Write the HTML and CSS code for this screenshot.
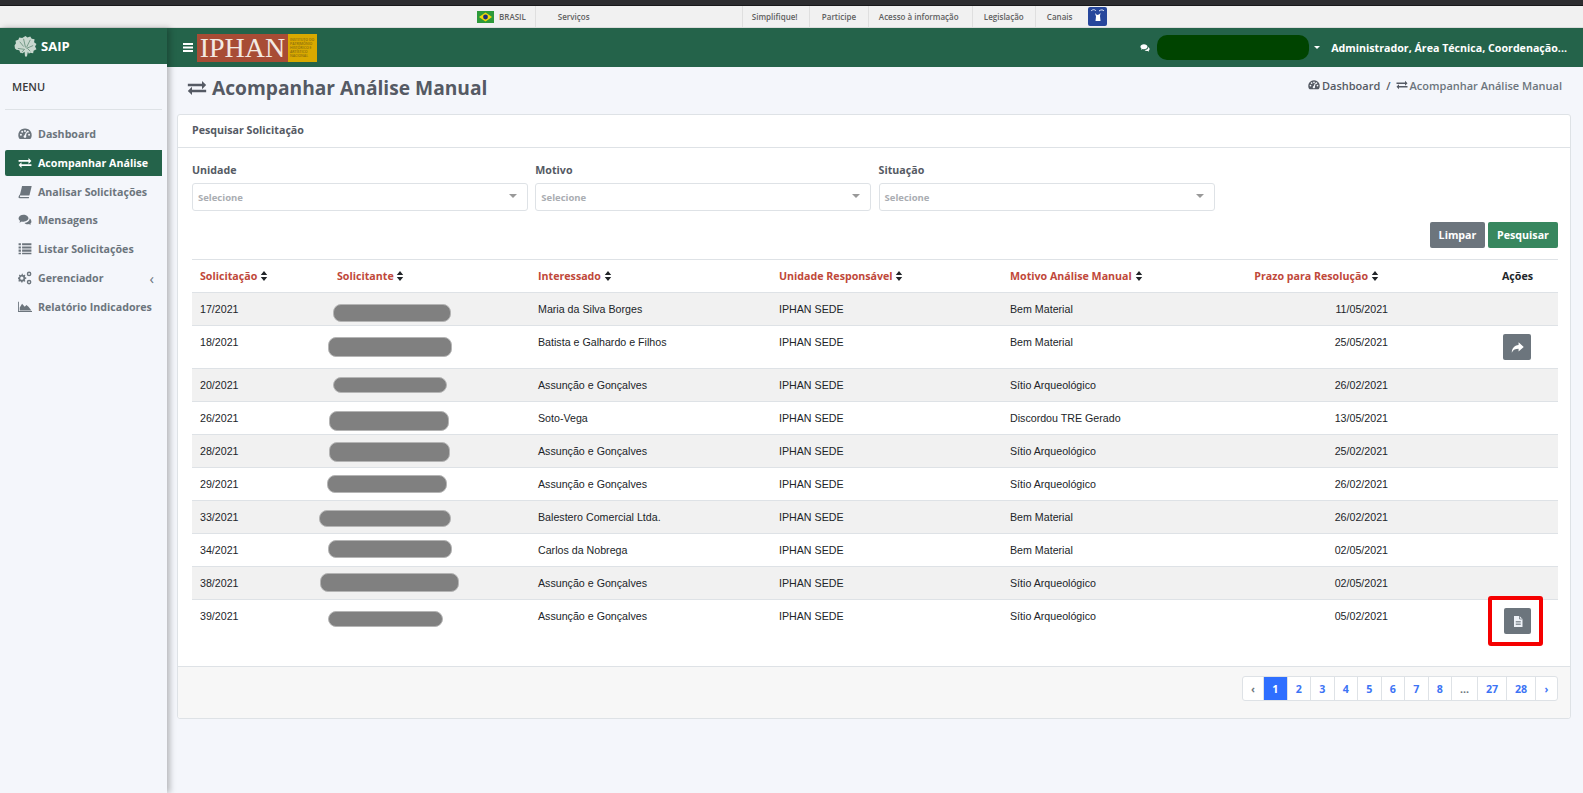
FILE: index.html
```html
<!DOCTYPE html>
<html lang="pt-BR">
<head>
    <meta charset="UTF-8">
    <title>SAIP - Acompanhar Análise Manual</title>
    <link rel="stylesheet" href="styles.css">
</head>
<body>
    <svg class="defs" width="0" height="0">
        <defs>
            <symbol id="i-exchange" viewBox="0 0 24 24"><path d="M1 7h17V3.500l5 5-5 5V10H1zM23 17H6v3.500l-5-5 5-5V14h17z"/></symbol>
            <symbol id="i-dash" viewBox="0 0 24 24"><path fill-rule="evenodd" d="M12 2.500a11.500 11.500 0 0 0-10 17.200c.3.5.8.8 1.400.8h17.200c.6 0 1.100-.3 1.400-.8A11.500 11.500 0 0 0 12 2.500zM12 5a1.700 1.700 0 1 1 0 3.400A1.700 1.700 0 0 1 12 5zM5 14.800a1.700 1.700 0 1 1 0-3.400 1.700 1.700 0 0 1 0 3.400zm2.200-5a1.700 1.700 0 1 1 0-3.400 1.700 1.700 0 0 1 0 3.400zM13.800 17.500a2.300 2.300 0 0 1-4.300-1.200c0-1 .7-1.900 1.700-2.200l3-6.300 1.300.5-1.700 6.500c.6.800.5 1.900 0 2.700zM19 14.800a1.700 1.700 0 1 1 0-3.400 1.700 1.700 0 0 1 0 3.400zm-2.200-5a1.700 1.700 0 1 1 0-3.400 1.700 1.700 0 0 1 0 3.400z"/></symbol>
            <symbol id="i-book" viewBox="0 0 24 24"><path d="M7 1.500h16.500L19.800 17H3.300z"/><path d="M2.800 16 1 20c-.5 1.500.3 2.500 1.700 2.500h15.800l.6-2H4c-1 0-1-1.500 0-1.800h15.500l.2-.7H3.400z"/></symbol>
            <symbol id="i-comments" viewBox="0 0 24 24"><path d="M9.500 3C4.800 3 1 5.700 1 9.200c0 1.800 1 3.400 2.700 4.500-.3 1-.9 1.800-1.700 2.600 1.700-.2 3.200-.8 4.400-1.800 1 .3 2 .4 3.100.4 4.700 0 8.500-2.700 8.500-5.800S14.200 3 9.500 3z"/><path d="M20 9.500c.1 4-3.900 7.200-9 7.500 1.300 1.500 3.300 2.300 5.500 2.300.8 0 1.500-.1 2.200-.3 1 .8 2.100 1.300 3.300 1.500-.5-.6-1-1.300-1.200-2 1.400-.9 2.200-2.200 2.200-3.600 0-2.300-1.200-4.200-3-5.400z"/></symbol>
            <symbol id="i-list" viewBox="0 0 24 24"><path d="M1 2h4v3.500H1zM7 2h16v3.500H7zM1 7.500h4V11H1zM7 7.500h16V11H7zM1 13h4v3.500H1zM7 13h16v3.500H7zM1 18.500h4V21H1zM7 18.500h16V21H7z"/></symbol>
            <symbol id="i-cogs" viewBox="0 0 24 24"><path fill-rule="evenodd" d="M8 6.500l1.800.7 1.500-1 1.400 1.400-1 1.500.7 1.800 1.800.4v2l-1.800.4-.7 1.800 1 1.500-1.400 1.400-1.500-1-1.800.7-.4 1.800h-2l-.4-1.800-1.800-.7-1.500 1-1.400-1.400 1-1.500-.7-1.800L0 13.300v-2l1.800-.4.7-1.800-1-1.500 1.400-1.400 1.500 1 1.800-.7.4-1.800h2zM6.600 9.500a2.800 2.800 0 1 0 0 5.600 2.800 2.800 0 0 0 0-5.600z"/><path fill-rule="evenodd" d="M19 1a4 4 0 1 1 0 8 4 4 0 0 1 0-8zm0 2.400a1.600 1.600 0 1 0 0 3.200 1.600 1.600 0 0 0 0-3.200zM19 15a4 4 0 1 1 0 8 4 4 0 0 1 0-8zm0 2.400a1.600 1.600 0 1 0 0 3.200 1.600 1.600 0 0 0 0-3.200z"/></symbol>
            <symbol id="i-chart" viewBox="0 0 24 24"><path d="M0 3h1.500v16H24v1.500H0z"/><path d="M3 18v-5l4-6.500 4.500 5 3-3 3.500 3 5 6.500z"/></symbol>
            <symbol id="i-sort" viewBox="0 0 10 14"><path d="M5 0l4.500 5.500h-9zM5 14L.5 8.500h9z"/></symbol>
        </defs>
    </svg>

    <div class="browser-edge"></div>

    <!-- Barra do governo -->
    <nav class="gov-bar">
        <span class="gov-flag"><svg viewBox="0 0 17 12" width="17" height="12"><rect width="17" height="12" fill="#2d9a3a"/><path d="M8.500 1.500 15 6l-6.500 4.500L2 6z" fill="#f2d70c"/><circle cx="8.500" cy="6" r="2.400" fill="#1c2f7c"/></svg></span>
        <span class="gov-item gov-brasil">BRASIL</span>
        <span class="gov-item gov-servicos">Serviços</span>
        <span class="gov-item gov-simp">Simplifique!</span>
        <span class="gov-item gov-part">Participe</span>
        <span class="gov-item gov-acesso">Acesso à informação</span>
        <span class="gov-item gov-leg">Legislação</span>
        <span class="gov-item gov-can">Canais</span>
        <span class="gov-access"><svg viewBox="0 0 19 19" width="19" height="19"><rect width="19" height="19" rx="2" fill="#27479c"/><path d="M3 4c2-2 4-1.500 5 0M11 4c2-1.500 4-1.500 5 0" stroke="#dfe6f5" fill="none"/><path d="M7 6l2 2 2-.5 1.500-1.500-.5 3 .5 5h-5l.5-4.500z" fill="#fff"/></svg></span>
    </nav>

    <div class="app">
        <aside class="sidebar">
            <div class="brand">
                <svg class="brand-logo" viewBox="0 0 24 22" width="23" height="21"><path d="M12 0l2 1.500L17 .5l1.500 2.500 3 .5-.5 3 2.500 2-1.500 2.500 1.500 3-3 1.500-.5 2.500-3-.5-1.500 1-1-2-1 5h-2l-.5-5-2 1.500-2.500-.5-1-2.500-3-.5L1 13 .5 10 2 7.500 1.500 5l3-1 1-2.500 3 .5z" fill="#c9d8cf"/><path d="M6 6l4 5M10 3l2 9M17 4l-4 8M20 10l-7 3M4 13l7 1M8 17l3-3M17 16l-3-3" stroke="#5d8874" stroke-width=".8" fill="none"/></svg>
                <span class="brand-name">SAIP</span>
            </div>
            <div class="menu-title">MENU</div>
            <ul class="menu">
                <li class="menu-item"><svg class="mi"><use href="#i-dash"/></svg>Dashboard</li>
                <li class="menu-item active"><svg class="mi"><use href="#i-exchange"/></svg>Acompanhar Análise</li>
                <li class="menu-item"><svg class="mi"><use href="#i-book"/></svg>Analisar Solicitações</li>
                <li class="menu-item"><svg class="mi"><use href="#i-comments"/></svg>Mensagens</li>
                <li class="menu-item"><svg class="mi"><use href="#i-list"/></svg>Listar Solicitações</li>
                <li class="menu-item"><svg class="mi"><use href="#i-cogs"/></svg>Gerenciador<span class="chev">‹</span></li>
                <li class="menu-item"><svg class="mi"><use href="#i-chart"/></svg>Relatório Indicadores</li>
            </ul>
        </aside>

        <div class="main">
            <header class="topbar">
                <svg class="burger" viewBox="0 0 10 9" width="10" height="9"><path d="M0 0h10v2H0zM0 3.500h10v2H0zM0 7h10v2H0z" fill="#fff"/></svg>
                <div class="iphan">
                    <span class="iphan-name">IPHAN</span>
                    <span class="iphan-sub">INSTITUTO DO PATRIMÔNIO HISTÓRICO E ARTÍSTICO NACIONAL</span>
                </div>
                <div class="top-right">
                    <svg class="top-chat"><use href="#i-comments"/></svg>
                    <span class="user-hidden"></span>
                    <span class="top-caret"></span>
                    <span class="top-role">Administrador, Área Técnica, Coordenação...</span>
                </div>
            </header>

            <div class="page-head">
                <h1><svg class="h1-icon"><use href="#i-exchange"/></svg>Acompanhar Análise Manual</h1>
                <div class="crumbs">
                    <svg class="crumb-icon"><use href="#i-dash"/></svg><b>Dashboard</b>
                    <span class="crumb-sep">/</span>
                    <svg class="crumb-icon"><use href="#i-exchange"/></svg><span>Acompanhar Análise Manual</span>
                </div>
            </div>

            <section class="card">
                <div class="card-title">Pesquisar Solicitação</div>
                <div class="card-body">
                    <div class="filters">
                        <div class="field">
                            <label>Unidade</label>
                            <div class="select">Selecione<span class="select-caret"></span></div>
                        </div>
                        <div class="field">
                            <label>Motivo</label>
                            <div class="select">Selecione<span class="select-caret"></span></div>
                        </div>
                        <div class="field">
                            <label>Situação</label>
                            <div class="select">Selecione<span class="select-caret"></span></div>
                        </div>
                    </div>
                    <div class="actions">
                        <button class="btn btn-grey">Limpar</button>
                        <button class="btn btn-green">Pesquisar</button>
                    </div>

                    <table class="grid">
                        <colgroup>
                            <col class="c1"><col class="c2"><col class="c3"><col class="c4"><col class="c5"><col class="c6"><col class="c7">
                        </colgroup>
                        <thead>
                            <tr>
                                <th>Solicitação <svg class="sort"><use href="#i-sort"/></svg></th>
                                <th>Solicitante <svg class="sort"><use href="#i-sort"/></svg></th>
                                <th>Interessado <svg class="sort"><use href="#i-sort"/></svg></th>
                                <th>Unidade Responsável <svg class="sort"><use href="#i-sort"/></svg></th>
                                <th>Motivo Análise Manual <svg class="sort"><use href="#i-sort"/></svg></th>
                                <th class="th-prazo">Prazo para Resolução <svg class="sort"><use href="#i-sort"/></svg></th>
                                <th class="th-acoes">Ações</th>
                            </tr>
                        </thead>
                        <tbody>
                            <tr>
                                <td>17/2021</td><td class="redacted"><span class="blob b1"></span></td><td>Maria da Silva Borges</td><td>IPHAN SEDE</td><td>Bem Material</td><td class="date">11/05/2021</td><td></td>
                            </tr>
                            <tr>
                                <td>18/2021</td><td class="redacted"><span class="blob b2"></span></td><td>Batista e Galhardo e Filhos</td><td>IPHAN SEDE</td><td>Bem Material</td><td class="date">25/05/2021</td>
                                <td class="acts"><button class="act"><svg viewBox="0 0 24 24" width="13" height="13"><path d="M14 2.500l9.500 8.500-9.500 8.500v-5C8 14.500 4 16 1.500 21.500 1.500 14 6 8.500 14 7.500z" fill="#fff"/></svg></button></td>
                            </tr>
                            <tr>
                                <td>20/2021</td><td class="redacted"><span class="blob b3"></span></td><td>Assunção e Gonçalves</td><td>IPHAN SEDE</td><td>Sítio Arqueológico</td><td class="date">26/02/2021</td><td></td>
                            </tr>
                            <tr>
                                <td>26/2021</td><td class="redacted"><span class="blob b4"></span></td><td>Soto-Vega</td><td>IPHAN SEDE</td><td>Discordou TRE Gerado</td><td class="date">13/05/2021</td><td></td>
                            </tr>
                            <tr>
                                <td>28/2021</td><td class="redacted"><span class="blob b5"></span></td><td>Assunção e Gonçalves</td><td>IPHAN SEDE</td><td>Sítio Arqueológico</td><td class="date">25/02/2021</td><td></td>
                            </tr>
                            <tr>
                                <td>29/2021</td><td class="redacted"><span class="blob b6"></span></td><td>Assunção e Gonçalves</td><td>IPHAN SEDE</td><td>Sítio Arqueológico</td><td class="date">26/02/2021</td><td></td>
                            </tr>
                            <tr>
                                <td>33/2021</td><td class="redacted"><span class="blob b7"></span></td><td>Balestero Comercial Ltda.</td><td>IPHAN SEDE</td><td>Bem Material</td><td class="date">26/02/2021</td><td></td>
                            </tr>
                            <tr>
                                <td>34/2021</td><td class="redacted"><span class="blob b8"></span></td><td>Carlos da Nobrega</td><td>IPHAN SEDE</td><td>Bem Material</td><td class="date">02/05/2021</td><td></td>
                            </tr>
                            <tr>
                                <td>38/2021</td><td class="redacted"><span class="blob b9"></span></td><td>Assunção e Gonçalves</td><td>IPHAN SEDE</td><td>Sítio Arqueológico</td><td class="date">02/05/2021</td><td></td>
                            </tr>
                            <tr class="row-last">
                                <td>39/2021</td><td class="redacted"><span class="blob b10"></span></td><td>Assunção e Gonçalves</td><td>IPHAN SEDE</td><td>Sítio Arqueológico</td><td class="date">05/02/2021</td>
                                <td class="acts">
                                    <span class="marked">
                                        <button class="act"><svg viewBox="0 0 24 24" width="12" height="13"><path d="M4 1h11l6 6v16H4z" fill="#eef2f8"/><path d="M15 1v6h6" fill="none" stroke="#6c757d" stroke-width="1.500"/><path d="M7.500 12h10M7.500 15h10M7.500 18h10" stroke="#6c757d" stroke-width="1.500"/></svg></button>
                                    </span>
                                </td>
                            </tr>
                        </tbody>
                    </table>
                </div>
                <div class="card-foot">
                    <ul class="pager">
                        <li class="p-prev">‹</li>
                        <li class="p-cur">1</li>
                        <li>2</li>
                        <li>3</li>
                        <li>4</li>
                        <li>5</li>
                        <li>6</li>
                        <li>7</li>
                        <li>8</li>
                        <li class="p-gap">...</li>
                        <li class="p-wide">27</li>
                        <li class="p-wide">28</li>
                        <li class="p-next">›</li>
                    </ul>
                </div>
            </section>
        </div>
    </div>
</body>
</html>
```

FILE: styles.css
```css
* {
    box-sizing: border-box;
}

html, body {
    height: 793px;
    overflow: hidden;
}

body {
    margin: 0;
    background-color: #f4f6fb;
    font-family: "Open Sans", sans-serif;
    font-size: 10.67px;
    color: #555a64;
}

.defs {
    position: absolute;
}

.browser-edge {
    height: 6px;
    background-color: #2d2d30;
    border-bottom: 1px solid #18181a;
}

/* Barra do governo */
.gov-bar {
    height: 22px;
    display: flex;
    align-items: center;
    background-color: #f1f1f1;
    border-bottom: 1px solid #dcdcdc;
    font-size: 8px;
    font-weight: 600;
    color: #606060;
}

.gov-flag {
    margin-left: 477px;
    display: flex;
}

.gov-item {
    height: 100%;
    display: flex;
    align-items: center;
    border-right: 1px solid #dfdfdf;
}

.gov-brasil { margin-left: 5px; padding-right: 9px; }
.gov-servicos { margin-left: 22px; width: 185px; }
.gov-simp { padding: 0 9px; width: 67px; }
.gov-part { padding: 0 12px; width: 59px; }
.gov-acesso { padding: 0 10px; width: 104px; }
.gov-leg { padding: 0 11px; width: 63px; }
.gov-can { padding: 0 11px; width: 50px; border-right: 0; }

.gov-access {
    margin-left: 2px;
    display: flex;
}

.app {
    display: flex;
    height: 765px;
}

/* Menu lateral */
.sidebar {
    width: 167px;
    flex-shrink: 0;
    background-color: #f4f6fb;
    box-shadow: 3px 0 6px rgba(0, 0, 0, 0.25);
    position: relative;
    z-index: 1;
}

.brand {
    height: 36px;
    display: flex;
    align-items: center;
    padding-left: 14px;
    background-color: #24634a;
}

.brand-name {
    margin-left: 4px;
    color: #fff;
    font-size: 13px;
    font-weight: 700;
}

.menu-title {
    height: 46px;
    margin: 0 5px;
    padding: 15px 7px 0;
    border-bottom: 1px solid #dee2e6;
    color: #3a3a3a;
    font-size: 11px;
    font-weight: 600;
}

.menu {
    list-style: none;
    margin: 0;
    padding: 11px 5px 0;
}

.menu-item {
    height: 26px;
    margin-bottom: 2.8px;
    display: flex;
    align-items: center;
    padding-left: 13px;
    border-radius: 2px 0 0 2px;
    color: #6c757d;
    font-size: 10.67px;
    font-weight: 700;
    white-space: nowrap;
}

.menu-item.active {
    background-color: #24634a;
    color: #fff;
}

.mi {
    width: 14px;
    height: 14px;
    margin-right: 6px;
    fill: currentColor;
    flex-shrink: 0;
}

.chev {
    margin-left: auto;
    margin-right: 8px;
    font-weight: 400;
    font-size: 15px;
}

.main {
    flex: 1;
    min-width: 0;
}

/* Cabeçalho */
.topbar {
    height: 39px;
    display: flex;
    align-items: center;
    padding-left: 16px;
    background-color: #24634a;
}

.burger {
    flex-shrink: 0;
}

.iphan {
    width: 120px;
    height: 28px;
    margin-left: 4px;
    display: flex;
    background-color: #d9a900;
}

.iphan-name {
    width: 91px;
    background-color: #a84c35;
    color: #f3e9e2;
    font-family: "Liberation Serif", serif;
    font-size: 28px;
    line-height: 28px;
    text-align: center;
}

.iphan-sub {
    width: 29px;
    padding: 4px 2px;
    color: #8a6d10;
    font-size: 3.5px;
    line-height: 4.2px;
    font-weight: 600;
}

.top-right {
    margin-left: auto;
    display: flex;
    align-items: center;
    padding-right: 16px;
    color: #fff;
}

.top-chat {
    width: 10px;
    height: 10px;
    fill: #fff;
}

.user-hidden {
    width: 152px;
    height: 25px;
    margin-left: 7px;
    border-radius: 10px;
    background-color: #004400;
}

.top-caret {
    margin-left: 5px;
    border-left: 3px solid transparent;
    border-right: 3px solid transparent;
    border-top: 3px solid #fff;
}

.top-role {
    margin-left: 11px;
    font-size: 10.67px;
    font-weight: 700;
    white-space: nowrap;
}

/* Título da página */
.page-head {
    height: 47px;
    display: flex;
    justify-content: space-between;
    padding: 0 21px 0 20px;
}

h1 {
    margin: 0;
    padding-top: 4px;
    display: flex;
    align-items: center;
    height: 37px;
    font-size: 19.2px;
    font-weight: 700;
    color: #555a64;
}

.h1-icon {
    width: 20px;
    height: 20px;
    margin-right: 5px;
    fill: #555a64;
}

.crumbs {
    display: flex;
    align-items: center;
    height: 36px;
    font-size: 11px;
    font-weight: 600;
    color: #6c757d;
}

.crumbs b {
    font-weight: 600;
    color: #555a64;
}

.crumb-icon {
    width: 12px;
    height: 12px;
    margin-right: 2px;
    fill: #555a64;
}

.crumb-sep {
    margin: 0 5px 0 6px;
    color: #555a64;
}

/* Card */
.card {
    height: 605px;
    margin: 0 12px 0 10px;
    display: flex;
    flex-direction: column;
    background-color: #fff;
    border: 1px solid #dee2e6;
    border-radius: 3px;
}

.card-title {
    height: 33px;
    flex-shrink: 0;
    padding: 8px 14px 0;
    border-bottom: 1px solid #dee2e6;
    font-size: 10.67px;
    font-weight: 700;
}

.card-body {
    height: 518px;
    flex-shrink: 0;
    padding: 15px 12px 0 14px;
}

.filters {
    display: grid;
    grid-template-columns: repeat(3, 336px);
    column-gap: 7.3px;
}

.field label {
    display: block;
    height: 20px;
    font-size: 10.67px;
    font-weight: 700;
}

.select {
    position: relative;
    height: 28px;
    padding: 7px 5px 0;
    border: 1px solid #dee2e6;
    border-radius: 3px;
    color: #aaadb2;
    font-size: 9.5px;
    font-weight: 700;
}

.select-caret {
    position: absolute;
    right: 10px;
    top: 10px;
    border-left: 4px solid transparent;
    border-right: 4px solid transparent;
    border-top: 4px solid #999;
}

.actions {
    display: flex;
    justify-content: flex-end;
    gap: 3px;
    margin-top: 11px;
    height: 37px;
}

.btn {
    height: 26px;
    padding: 0;
    border: 0;
    border-radius: 2px;
    color: #fff;
    font-family: inherit;
    font-size: 10.67px;
    font-weight: 700;
}

.btn-grey {
    width: 55px;
    background-color: #6c757d;
}

.btn-green {
    width: 70px;
    background-color: #38875f;
}

/* Tabela */
.grid {
    width: 1366px;
    table-layout: fixed;
    border-collapse: collapse;
    font-family: "Liberation Sans", Arial, sans-serif;
    font-size: 10.67px;
    color: #212529;
}

.c1 { width: 137px; }
.c2 { width: 201px; }
.c3 { width: 241px; }
.c4 { width: 231px; }
.c5 { width: 238px; }
.c6 { width: 155px; }

.grid th {
    height: 33px;
    padding: 0 8px;
    border-top: 1px solid #dee2e6;
    border-bottom: 1px solid #dee2e6;
    text-align: left;
    font-family: "Open Sans", sans-serif;
    font-size: 10.67px;
    font-weight: 700;
    color: #c0483a;
    white-space: nowrap;
}

.grid th.th-prazo {
    text-align: center;
    padding-right: 10px;
}

.grid th.th-acoes {
    text-align: right;
    padding-right: 25px;
    color: #212529;
}

.sort {
    width: 8px;
    height: 10px;
    vertical-align: -1px;
    fill: #212529;
}

.grid td {
    height: 33px;
    padding: 8px;
    line-height: 16px;
    border-bottom: 1px solid #dee2e6;
    vertical-align: top;
    white-space: nowrap;
}

.grid tbody tr:nth-child(odd) td {
    background-color: #f1f1f1;
}

.grid tbody tr:nth-child(even) td {
    background-color: #fff;
}

.grid tr.row-last td {
    height: 66px;
    border-bottom: 0;
}

.grid td.date {
    text-align: right;
    padding-right: 7px;
}

.grid td.acts {
    text-align: right;
    padding-right: 27px;
}

.act {
    width: 28px;
    height: 26px;
    padding: 0;
    display: inline-flex;
    align-items: center;
    justify-content: center;
    vertical-align: top;
    border: 0;
    border-radius: 2px;
    background-color: #6c757d;
}

/* Tarjas cinza sobre os nomes */
.redacted {
    position: relative;
}

.blob {
    position: absolute;
    background-color: #808080;
    border: 1px solid #b5b5b5;
    border-radius: 8px;
}

.b1 { left: 4px; top: 11px; width: 118px; height: 18px; }
.b2 { left: -1px; top: 11px; width: 124px; height: 20px; }
.b3 { left: 4px; top: 8px; width: 114px; height: 16px; }
.b4 { left: 0; top: 9px; width: 120px; height: 20px; }
.b5 { left: 0; top: 7px; width: 121px; height: 20px; }
.b6 { left: -2px; top: 7px; width: 120px; height: 18px; }
.b7 { left: -10px; top: 9px; width: 132px; height: 17px; }
.b8 { left: -1px; top: 6px; width: 124px; height: 18px; }
.b9 { left: -9px; top: 6px; width: 139px; height: 19px; }
.b10 { left: -1px; top: 11px; width: 115px; height: 16px; }

/* Destaque vermelho em volta do botão */
.marked {
    position: relative;
    display: inline-block;
}

.marked .act {
    width: 27px;
}

.marked::after {
    content: "";
    position: absolute;
    inset: -12px -12px -12px -16px;
    border: 4px solid #f50000;
    border-radius: 3px;
}

/* Paginação */
.card-foot {
    height: 52px;
    flex-shrink: 0;
    display: flex;
    justify-content: flex-end;
    padding: 9px 12px 0 0;
    background-color: #f7f7f7;
    border-top: 1px solid #dee2e6;
    border-radius: 0 0 3px 3px;
}

.pager {
    list-style: none;
    margin: 0;
    padding: 0;
    height: 25px;
    display: flex;
    background-color: #fff;
    border: 1px solid #dee2e6;
    border-radius: 3px;
    font-size: 10.67px;
    font-weight: 700;
    color: #3d74f5;
}

.pager li {
    width: 23.5px;
    display: flex;
    align-items: center;
    justify-content: center;
    border-right: 1px solid #dee2e6;
}

.pager li.p-prev { width: 21px; color: #6c757d; }
.pager li.p-cur { background-color: #2f6fff; color: #fff; }
.pager li.p-gap { width: 26px; color: #6c757d; }
.pager li.p-wide { width: 29px; }
.pager li.p-next { width: 21px; border-right: 0; }
```
